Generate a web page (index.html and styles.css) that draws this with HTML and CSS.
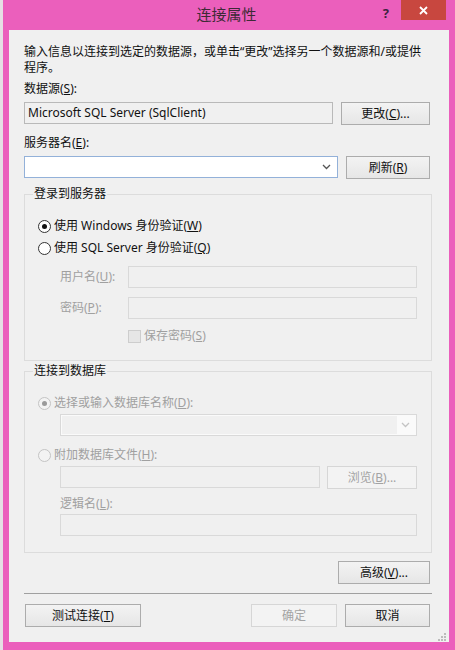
FILE: index.html
```html
<!DOCTYPE html>
<html lang="zh-CN">
<head>
  <meta charset="UTF-8">
  <title>连接属性</title>
  <link rel="stylesheet" href="styles.css">
</head>
<body>
  <div class="window">
    <div class="titlebar">
      <div class="title">连接属性</div>
      <div class="controls">
        <span class="help">?</span>
        <span class="close">
          <svg width="9" height="9" viewBox="0 0 9 9"><path d="M1 1L8 8M8 1L1 8" stroke="#fff" stroke-width="1.8" fill="none"/></svg>
        </span>
      </div>
    </div>

    <div class="content">
      <div class="intro">输入信息以连接到选定的数据源，或单击“更改”选择另一个数据源和/或提供<br>程序。</div>

      <div class="label">数据源(<u>S</u>):</div>
      <div class="row">
        <div class="textbox readonly source">Microsoft SQL Server (SqlClient)</div>
        <span class="btn w89">更改(<u>C</u>)...</span>
      </div>

      <div class="label gap10">服务器名(<u>E</u>):</div>
      <div class="row">
        <div class="combo server">
          <span class="field"></span>
          <svg class="chev" width="9" height="6" viewBox="0 0 9 6"><path d="M1 1L4.5 4.5L8 1" stroke="#555" stroke-width="1.3" fill="none"/></svg>
        </div>
        <span class="btn w84">刷新(<u>R</u>)</span>
      </div>

      <div class="group login">
        <div class="legend">登录到服务器</div>
        <div class="opt first"><span class="radio on"></span>使用 Windows 身份验证(<u>W</u>)</div>
        <div class="opt second"><span class="radio"></span>使用 SQL Server 身份验证(<u>Q</u>)</div>
        <div class="sub">
          <div class="field-row user">
            <span class="flabel dis">用户名(<u>U</u>):</span>
            <span class="textbox disabled w289"></span>
          </div>
          <div class="field-row pass">
            <span class="flabel dis">密码(<u>P</u>):</span>
            <span class="textbox disabled w289"></span>
          </div>
          <div class="check-row dis"><span class="checkbox"></span>保存密码(<u>S</u>)</div>
        </div>
      </div>

      <div class="group db">
        <div class="legend">连接到数据库</div>
        <div class="opt first dis"><span class="radio on off"></span>选择或输入数据库名称(<u>D</u>):</div>
        <div class="sub">
          <div class="combo disabled w357">
            <span class="field"></span>
            <svg class="chev" width="9" height="6" viewBox="0 0 9 6"><path d="M1 1L4.5 4.5L8 1" stroke="#c4c4c4" stroke-width="1.3" fill="none"/></svg>
          </div>
        </div>
        <div class="opt attach dis"><span class="radio off"></span>附加数据库文件(<u>H</u>):</div>
        <div class="sub">
          <div class="row file">
            <span class="textbox disabled w260"></span>
            <span class="btn disabled w90">浏览(<u>B</u>)...</span>
          </div>
          <div class="plain dis">逻辑名(<u>L</u>):</div>
          <span class="textbox disabled w357 logic"></span>
        </div>
      </div>

      <div class="adv-row">
        <span class="btn w92">高级(<u>V</u>)...</span>
      </div>

      <div class="sep"></div>

      <div class="actions">
        <span class="btn w116">测试连接(<u>T</u>)</span>
        <span class="spacer"></span>
        <span class="btn disabled w86">确定</span>
        <span class="btn w85">取消</span>
      </div>

      <svg class="grip" width="8" height="8" viewBox="0 0 8 8">
        <rect x="6" y="0" width="2" height="2" fill="#bbb"/>
        <rect x="3" y="3" width="2" height="2" fill="#bbb"/>
        <rect x="6" y="3" width="2" height="2" fill="#bbb"/>
        <rect x="0" y="6" width="2" height="2" fill="#bbb"/>
        <rect x="3" y="6" width="2" height="2" fill="#bbb"/>
        <rect x="6" y="6" width="2" height="2" fill="#bbb"/>
      </svg>
    </div>
  </div>
</body>
</html>
```

FILE: styles.css
```css
body {
  margin: 0;
  background: #e6dfe4;
  font: 12px/16px "Noto Sans", "Noto Sans CJK SC", sans-serif;
  color: #111;
}
u {
  text-underline-offset: 1px;
}
.window {
  margin-left: 3px;
  width: 452px;
  height: 650px;
  background: #eb5fbc;
  display: flex;
  flex-direction: column;
}

/* 标题栏 */
.titlebar {
  height: 30px;
  flex: none;
  display: grid;
  grid-template-columns: 1fr auto 1fr;
  padding-right: 5px;
}
.title {
  grid-column: 2;
  margin-top: 6px;
  font-family: "Noto Sans CJK SC", sans-serif;
  font-size: 15px;
  line-height: 16px;
  color: #3d2a36;
}
.controls {
  grid-column: 3;
  justify-self: end;
  display: flex;
  align-items: flex-start;
  margin-right: 4px;
}
.help {
  margin-top: 5px;
  margin-right: 12px;
  font-weight: bold;
  font-size: 13px;
  color: #3d2340;
}
.close {
  width: 45px;
  height: 20px;
  background: #c8473f;
  display: flex;
  align-items: center;
  justify-content: center;
}

/* 主体 */
.content {
  flex: 1;
  position: relative;
  margin: 0 6px 8px 6px;
  padding: 14px 17px 0 15px;
  background: #f0f0f0;
}
.label {
  margin-top: 5px;
}
.gap10 {
  margin-top: 10px;
}
.row {
  display: flex;
  gap: 8px;
  margin-top: 5px;
  align-items: flex-start;
}
.dis {
  color: #a0a0a0;
}

.textbox {
  display: block;
  box-sizing: border-box;
  height: 22px;
  border: 1px solid #b9b9b9;
  background: #f0f0f0;
  padding: 2px 3px;
  line-height: 16px;
}
.textbox.source {
  width: 309px;
}
.textbox.disabled {
  border-color: #d9d9d9;
  background: #f0f0f0;
}
.w289 { width: 289px; }
.w260 { width: 260px; }
.w357 { width: 357px; }

.combo {
  box-sizing: border-box;
  height: 22px;
  border: 1px solid #93b1d9;
  background: #fff;
  display: flex;
  align-items: center;
}
.combo.server {
  width: 314px;
}
.combo .field {
  flex: 1;
  align-self: stretch;
}
.combo .chev {
  margin: 0 6px 0 4px;
}
.combo.disabled {
  margin-top: 3px;
  border-color: #d9d9d9;
  background: #fafafa;
}
.combo.disabled .field {
  background: #f0f0f0;
  margin: 1px 0 1px 1px;
}

.btn {
  box-sizing: border-box;
  height: 23px;
  border: 1px solid #acacac;
  background: linear-gradient(#f3f3f3, #e6e6e6);
  display: flex;
  align-items: center;
  justify-content: center;
  flex: none;
}
.btn.disabled {
  border-color: #d6d6d6;
  background: #f3f3f3;
  color: #a3a3a3;
}
.w84 { width: 84px; }
.w85 { width: 85px; }
.w86 { width: 86px; }
.w89 { width: 89px; }
.w90 { width: 90px; }
.w92 { width: 92px; }
.w116 { width: 116px; }

/* 分组框 */
.group {
  border: 1px solid #dcdcdc;
  padding: 0 0 16px 13px;
}
.group.login {
  margin-top: 15px;
}
.group.db {
  margin-top: 10px;
}
.legend {
  margin: -9px 0 0 -5px;
  width: fit-content;
  padding: 0 1px;
  background: #f0f0f0;
}
.opt {
  display: flex;
  align-items: center;
}
.opt.first {
  margin-top: 16px;
}
.opt.second {
  margin-top: 6px;
}
.opt.attach {
  margin-top: 11px;
}
.radio {
  box-sizing: border-box;
  width: 13px;
  height: 13px;
  border: 1px solid #333;
  border-radius: 50%;
  background: #fff;
  margin-right: 3px;
  display: flex;
  align-items: center;
  justify-content: center;
}
.radio.on::after {
  content: "";
  width: 5px;
  height: 5px;
  border-radius: 50%;
  background: #111;
}
.radio.off {
  border-color: #c4c4c4;
  background: #f3f3f3;
}
.radio.off::after {
  background: #9a9a9a;
}

.sub {
  margin-left: 22px;
}
.field-row {
  display: flex;
  align-items: center;
}
.field-row.user {
  margin-top: 10px;
}
.field-row.pass {
  margin-top: 9px;
}
.flabel {
  width: 68px;
}
.check-row {
  display: flex;
  align-items: center;
  margin: 9px 0 0 68px;
}
.checkbox {
  box-sizing: border-box;
  width: 13px;
  height: 13px;
  border: 1px solid #cdcdcd;
  background: #e6e6e6;
  margin-right: 3px;
}

.row.file {
  margin-top: 3px;
  gap: 7px;
}
.plain {
  margin-top: 7px;
}
.logic {
  margin-top: 2px;
}

.adv-row {
  display: flex;
  justify-content: flex-end;
  margin: 8px 2px 0 0;
}
.sep {
  margin-top: 9px;
  border-top: 1px solid #a0a0a0;
}
.actions {
  display: flex;
  gap: 8px;
  margin: 10px 2px 0 1px;
}
.spacer {
  flex: 1;
}
.grip {
  position: absolute;
  right: 3px;
  bottom: 1px;
}
```
